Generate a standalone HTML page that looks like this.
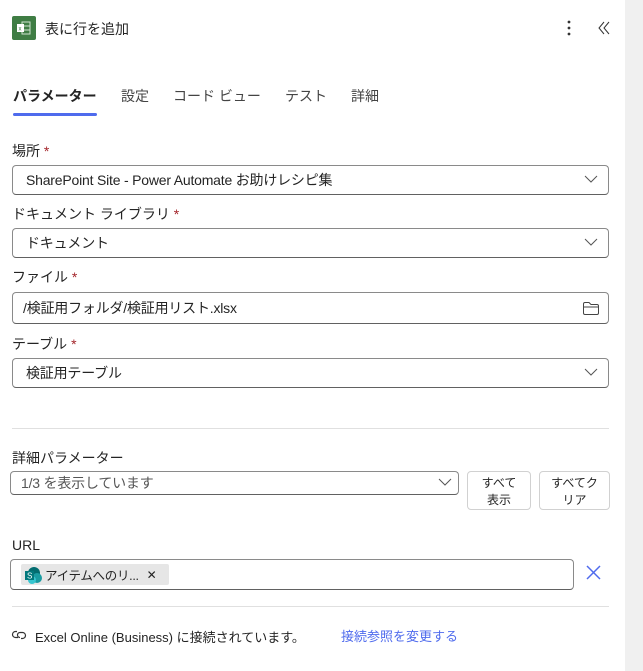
<!DOCTYPE html>
<html><head><meta charset="utf-8"><style>
*{box-sizing:border-box;margin:0;padding:0}
body{width:643px;height:671px;background:#fff;font-family:"Liberation Sans","Noto Sans CJK JP",sans-serif;font-size:14px;color:#242424;position:relative;overflow:hidden}
.a{position:absolute}
.strip{left:625px;top:0;width:18px;height:671px;background:#f0f0f0}
.lbl{left:12px;font-size:14px;line-height:18px}
.req{color:#a4262c}
.inp{left:12px;width:597px;border:1px solid #8a8a8a;border-bottom-color:#616161;border-radius:4px;background:#fff;padding-left:13px;display:flex;align-items:center;font-size:14px;letter-spacing:-0.2px}
.chev{position:absolute;right:10px;top:50%;margin-top:-5px}
.hr{left:12px;width:597px;height:1px;background:#e0e0e0}
.btn{border:1px solid #d1d1d1;border-radius:4px;font-size:12px;line-height:17px;text-align:center;padding-top:3px}
</style></head><body>
<div class="a strip"></div>
<div class="a" style="left:12px;top:16px;width:24px;height:24px;background:#3f7d44;border-radius:2px">
<svg width="24" height="24"><rect x="10" y="6" width="8" height="12" fill="none" stroke="#cfe3cf" stroke-width="1"/><line x1="10" y1="10" x2="18" y2="10" stroke="#cfe3cf"/><line x1="10" y1="14" x2="18" y2="14" stroke="#cfe3cf"/><rect x="5" y="8" width="7" height="8" fill="#fff"/><text x="6.5" y="14.5" font-size="6" fill="#3f7d44" font-family="Liberation Sans">x</text></svg></div>
<div class="a" style="left:45px;top:19px;font-size:14px">表に行を追加</div>
<svg class="a" style="left:564px;top:19px" width="10" height="18"><circle cx="5" cy="3" r="1.4" fill="#333"/><circle cx="5" cy="9" r="1.4" fill="#333"/><circle cx="5" cy="15" r="1.4" fill="#333"/></svg>
<svg class="a" style="left:597px;top:20px" width="14" height="16"><path d="M7 2 L2 8 L7 14 M12 2 L7 8 L12 14" fill="none" stroke="#333" stroke-width="1"/></svg>
<div class="a" style="left:13px;top:86px;font-weight:bold;font-size:14px">パラメーター</div>
<div class="a" style="left:121px;top:86px;color:#444">設定</div>
<div class="a" style="left:173px;top:86px;color:#444">コード ビュー</div>
<div class="a" style="left:285px;top:86px;color:#444">テスト</div>
<div class="a" style="left:351px;top:86px;color:#444">詳細</div>
<div class="a" style="left:13px;top:113px;width:84px;height:3px;background:#4f6bed;border-radius:2px"></div>

<div class="a lbl" style="top:142px">場所 <span class="req">*</span></div>
<div class="a inp" style="top:165px;height:30px">SharePoint Site - Power Automate お助けレシピ集<svg class="chev" width="14" height="9"><path d="M1 1 L7 7 L13 1" fill="none" stroke="#555"/></svg></div>
<div class="a lbl" style="top:205px">ドキュメント ライブラリ <span class="req">*</span></div>
<div class="a inp" style="top:228px;height:30px">ドキュメント<svg class="chev" width="14" height="9"><path d="M1 1 L7 7 L13 1" fill="none" stroke="#555"/></svg></div>
<div class="a lbl" style="top:268px">ファイル <span class="req">*</span></div>
<div class="a inp" style="top:292px;height:32px;padding-left:10px">/検証用フォルダ/検証用リスト.xlsx<svg class="a" style="right:8px;top:8px" width="18" height="15"><path d="M1.5 3 Q1.5 1.5 3 1.5 H7 L9 3.5 H15 Q16.5 3.5 16.5 5 V12 Q16.5 13.5 15 13.5 H3 Q1.5 13.5 1.5 12 Z M1.5 6 H16.5" fill="none" stroke="#444"/></svg></div>
<div class="a lbl" style="top:335px">テーブル <span class="req">*</span></div>
<div class="a inp" style="top:358px;height:30px">検証用テーブル<svg class="chev" width="14" height="9"><path d="M1 1 L7 7 L13 1" fill="none" stroke="#555"/></svg></div>
<div class="a hr" style="top:428px"></div>
<div class="a lbl" style="top:449px">詳細パラメーター</div>
<div class="a inp" style="left:10px;width:449px;top:471px;height:24px;padding-left:10px;color:#555">1/3 を表示しています<svg class="chev" width="14" height="9" style="right:6px"><path d="M1 1 L7 7 L13 1" fill="none" stroke="#555"/></svg></div>
<div class="a btn" style="left:467px;top:471px;width:64px;height:39px">すべて<br>表示</div>
<div class="a btn" style="left:539px;top:471px;width:71px;height:39px">すべてク<br>リア</div>
<div class="a lbl" style="top:536px">URL</div>
<div class="a inp" style="left:10px;width:564px;top:559px;height:31px;padding-left:10px">
<div style="background:#e6e6e6;height:21px;width:148px;display:flex;align-items:center;font-size:12.5px;padding-left:2px;border-radius:2px;letter-spacing:-0.3px">
<svg width="20" height="18"><circle cx="11" cy="7" r="6" fill="#036c70"/><circle cx="14" cy="12" r="5" fill="#1a9ba1"/><circle cx="9" cy="14" r="4" fill="#37c6d0"/><rect x="2" y="5" width="9" height="9" fill="#03787c"/><text x="4" y="12.5" font-size="8" fill="#fff">S</text></svg>
<span style="margin-left:2px">アイテムへのリ...</span><span style="margin-left:8px;font-size:12px">✕</span></div></div>
<svg class="a" style="left:586px;top:565px" width="15" height="15"><path d="M1 1 L14 14 M14 1 L1 14" stroke="#4f6bed" stroke-width="1.5"/></svg>
<div class="a hr" style="top:606px"></div>
<svg class="a" style="left:11px;top:628px" width="16" height="14"><path d="M6 3.5 H4.5 A3 3 0 0 0 4.5 9.5 H7 M10 10.5 H11.5 A3 3 0 0 0 11.5 4.5 H9 A2.5 2.5 0 0 0 9 9.5" fill="none" stroke="#333" stroke-width="1.2"/></svg>
<div class="a" style="left:35px;top:627px;font-size:13px">Excel Online (Business) に接続されています。</div>
<div class="a" style="left:341px;top:626px;font-size:13px;color:#4f6bed">接続参照を変更する</div>
</body></html>
